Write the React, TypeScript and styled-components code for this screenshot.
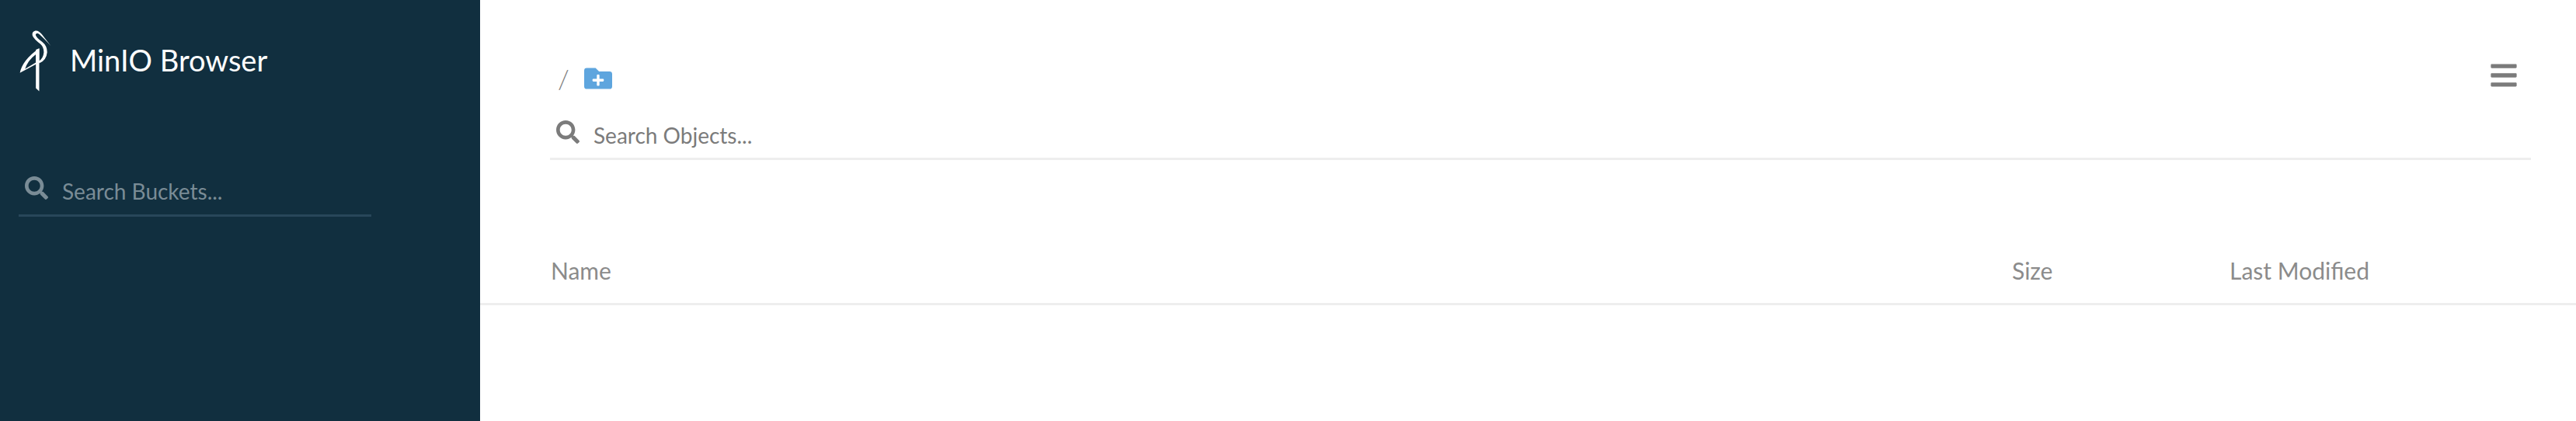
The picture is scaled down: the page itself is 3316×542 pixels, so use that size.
import React from 'react';
import styled, { createGlobalStyle } from 'styled-components';
import { FaBars, FaFolderPlus, FaSearch } from 'react-icons/fa';

const GlobalStyle = createGlobalStyle`
  html, body {
    margin: 0;
    padding: 0;
    background: #ffffff;
    font-family: Lato, "Open Sans", sans-serif;
  }
`;

const Page = styled.div`
  display: flex;
  width: 3316px;
  height: 542px;
  overflow: hidden;
`;

const Sidebar = styled.aside`
  flex: 0 0 618px;
  box-sizing: border-box;
  padding: 38px 140px 0 24px;
  background: #112f3f;
`;

const Brand = styled.div`
  display: flex;
  align-items: center;
  gap: 23px;
  height: 80px;
`;

const Title = styled.h1`
  margin: 0;
  color: #ffffff;
  font-size: 38px;
  font-weight: 400;
  line-height: 1;
  position: relative;
  top: -1px;
`;

const SearchBox = styled.div<{ $dark?: boolean }>`
  display: flex;
  align-items: center;
  height: ${(p) => (p.$dark ? '60px' : '58px')};
  border-bottom: 3px solid ${(p) => (p.$dark ? '#28475a' : '#eeeeee')};
  color: ${(p) => (p.$dark ? '#7a8c96' : '#7b7b7b')};
  padding-left: 8px;
`;

const SearchIcon = styled(FaSearch)`
  flex: none;
  width: 30px;
  height: 30px;
  margin-right: 18px;
  margin-top: -8px;
`;

const SearchLabel = styled.span`
  font-size: 28px;
  line-height: 1;
`;

const SidebarSearch = styled.div`
  margin-top: 98px;
`;

const Main = styled.main`
  flex: 1;
  min-width: 0;
  display: flex;
  flex-direction: column;
`;

const Head = styled.header`
  padding: 78px 58px 0 90px;
`;

const PathRow = styled.div`
  display: flex;
  justify-content: space-between;
  height: 38px;
`;

const Crumbs = styled.div`
  display: flex;
  align-items: flex-start;
  gap: 17px;
  padding: 6px 0 0 10px;
  color: #7b7b7b;
`;

const Slash = styled.span`
  font-size: 34px;
  line-height: 34px;
  font-weight: 300;
`;

const NewFolder = styled(FaFolderPlus)`
  width: 40px;
  height: 36px;
  margin-top: -1px;
  color: #5ea5de;
`;

const Menu = styled(FaBars)`
  width: 38px;
  height: 38px;
  margin-right: 16px;
  color: #7b7b7b;
`;

const ObjectSearch = styled.div`
  margin-top: 29px;
`;

const TableHead = styled.div`
  display: grid;
  grid-template-columns: 1881px 280px 1fr;
  align-items: center;
  margin-top: 100px;
  height: 84px;
  padding-left: 91px;
  border-bottom: 3px solid #eeeeee;
  color: #8b8b8b;
  font-size: 30px;
`;

const Bird = () => (
  <svg width="43" height="82" viewBox="80 50 130 245" fill="#ffffff" fillRule="evenodd">
    <path d="M205 115 L170 70 Q158 54 145 56 Q130 60 134 76 Q140 90 165 108 Q178 120 178 140 Q176 165 158 175 L160 183 Q188 172 191 140 Q191 115 172 100 Q147 82 146 72 Q147 65 155 67 Q163 70 205 115 Z" />
    <path d="M85 220 Q95 170 160 125 L160 178 L150 185 Z M105 205 L147 180 L147 148 Q115 172 105 205 Z" />
    <path d="M147 130 L160 125 L160 292 L147 280 Z" />
  </svg>
);

export default function App(): React.ReactElement {
  return (
    <Page>
      <GlobalStyle />
      <Sidebar>
        <Brand>
          <Bird />
          <Title>MinIO Browser</Title>
        </Brand>
        <SidebarSearch>
          <SearchBox $dark>
            <SearchIcon />
            <SearchLabel>Search Buckets...</SearchLabel>
          </SearchBox>
        </SidebarSearch>
      </Sidebar>
      <Main>
        <Head>
          <PathRow>
            <Crumbs>
              <Slash>/</Slash>
              <NewFolder />
            </Crumbs>
            <Menu />
          </PathRow>
          <ObjectSearch>
            <SearchBox>
              <SearchIcon />
              <SearchLabel>Search Objects...</SearchLabel>
            </SearchBox>
          </ObjectSearch>
        </Head>
        <TableHead>
          <span>Name</span>
          <span>Size</span>
          <span>Last Modified</span>
        </TableHead>
      </Main>
    </Page>
  );
}
